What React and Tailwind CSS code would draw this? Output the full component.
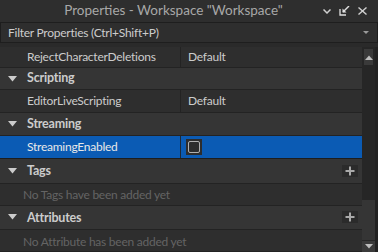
import React from "react";

const font = { fontFamily: "Lato, 'Noto Sans', sans-serif" };

function Tri() {
  return (
    <svg width="9" height="6" viewBox="0 0 9 6" className="shrink-0">
      <path d="M0 0 H9 L4.5 5.5 Z" fill="#cccccc" />
    </svg>
  );
}

function Plus() {
  return (
    <div className="w-[16px] h-[12px] bg-[#2b2b2b] flex items-center justify-center">
      <svg width="10" height="10" viewBox="0 0 10 10">
        <path d="M5 0.5 V9.5 M0.5 5 H9.5" stroke="#aaaaaa" strokeWidth="2" />
      </svg>
    </div>
  );
}

function PropRow({ name, value, h = "h-[22px]" }) {
  return (
    <div className={`flex ${h} bg-[#2e2e2e] border-b border-[#232323]`}>
      <div className="w-[181px] pl-[27px] flex items-center text-[#cccccc] border-r border-[#232323]">{name}</div>
      <div className="flex-1 pl-[7px] flex items-center text-[#cccccc]">{value}</div>
    </div>
  );
}

function Header({ title, plus, h = "h-[22px]", pt = "" }) {
  return (
    <div className={`flex ${h} items-center bg-[#353535] border-b border-[#232323]`}>
      <div className="w-[27px] pl-[8px] flex items-center">
        <Tri />
      </div>
      <div className={`flex-1 font-bold text-[#cccccc] text-[12.5px] tracking-[-0.2px] ${pt}`}>{title}</div>
      {plus && <div className="pr-[4px]"><Plus /></div>}
    </div>
  );
}

function Empty({ text, h = "h-[21px]" }) {
  return (
    <div className={`flex ${h} items-center bg-[#2e2e2e] border-b border-[#232323] pl-[23px] pt-[2px] text-[#646464]`}>
      {text}
    </div>
  );
}

export default function App() {
  return (
    <div className="w-[378px] h-[252px] overflow-hidden bg-[#2a2a2a] text-[12px] tracking-[-0.25px] leading-none flex flex-col" style={font}>
      {/* Title bar */}
      <div className="h-[22px] flex items-center bg-[#2e2e2e] shrink-0">
        <div className="flex-1 text-center text-[#a8a8a8] text-[13.5px] tracking-normal pl-[24px]">Properties - Workspace "Workspace"</div>
        <div className="flex items-center gap-[8px] pr-[11px]">
          <svg width="8" height="5" viewBox="0 0 8 5">
            <path d="M0.5 0.5 L4 4 L7.5 0.5" stroke="#cfcfcf" strokeWidth="1.5" fill="none" />
          </svg>
          <svg width="11" height="10" viewBox="0 0 11 10">
            <path d="M1 3 V9 H7" stroke="#e0e0e0" strokeWidth="1.3" fill="none" />
            <path d="M10 0 L4 6" stroke="#e0e0e0" strokeWidth="1.4" />
            <path d="M3.5 2.5 V6.5 H7.5 Z" fill="#e0e0e0" />
          </svg>
          <svg width="9" height="8" viewBox="0 0 9 8">
            <path d="M0.5 0.5 L8.5 7.5 M8.5 0.5 L0.5 7.5" stroke="#d0d0d0" strokeWidth="1.4" />
          </svg>
        </div>
      </div>
      {/* Filter */}
      <div className="h-[21px] shrink-0 flex items-center bg-[#2e2e2e] border border-[#1e1e1e] pl-[7px] pr-[8px]">
        <div className="flex-1 text-[#cccccc]">Filter Properties (Ctrl+Shift+P)</div>
        <svg width="6" height="3" viewBox="0 0 6 3">
          <path d="M0 0 H6 L3 3 Z" fill="#9a9a9a" />
        </svg>
      </div>
      <div className="h-[4px] shrink-0 bg-[#2a2a2a]" />
      <div className="flex flex-1 min-h-0">
        <div className="w-[362px] flex flex-col">
          <PropRow name="RejectCharacterDeletions" value="Default" h="h-[21px]" />
          <Header title="Scripting" h="h-[23px]" />
          <PropRow name="EditorLiveScripting" value="Default" h="h-[23px]" />
          <Header title="Streaming" h="h-[23px]" />
          <div className="flex h-[24px] bg-[#0b5bb4] border-b border-[#1e1e1e]">
            <div className="w-[181px] pl-[27px] flex items-center text-[#e8e8e8] border-r border-[#1d2a3a]">StreamingEnabled</div>
            <div className="flex-1 pl-[5px] flex items-center">
              <div className="w-[16px] h-[16px] bg-[#2d2d2d] flex items-center justify-center">
                <div className="w-[12px] h-[12px] rounded-[2px] border border-[#b0b0b0]" />
              </div>
            </div>
          </div>
          <Header title="Tags" plus h="h-[25px]" pt="pt-[1px]" />
          <Empty text="No Tags have been added yet" h="h-[22px]" />
          <Header title="Attributes" plus h="h-[25px]" pt="pt-[2px]" />
          <Empty text="No Attribute has been added yet" h="h-[22px]" />
        </div>
        <div className="w-[16px] flex flex-col bg-[#262626] border-r-[3px] border-[#222222]">
          <div className="h-[16px] mx-[2px] mt-[2px] bg-[#3a3a3a] flex items-center justify-center">
            <svg width="8" height="5" viewBox="0 0 8 5"><path d="M0 5 L4 0.5 L8 5 Z" fill="#bdbdbd" /></svg>
          </div>
          <div className="h-[135px]" />
          <div className="h-[40px] bg-[#353535]" />
          <div className="flex-1 mt-[1px] bg-[#3a3a3a] flex items-start pt-[3px] justify-center">
            <svg width="8" height="5" viewBox="0 0 8 5"><path d="M0 0 H8 L4 4.5 Z" fill="#bdbdbd" /></svg>
          </div>
        </div>
      </div>
    </div>
  );
}
